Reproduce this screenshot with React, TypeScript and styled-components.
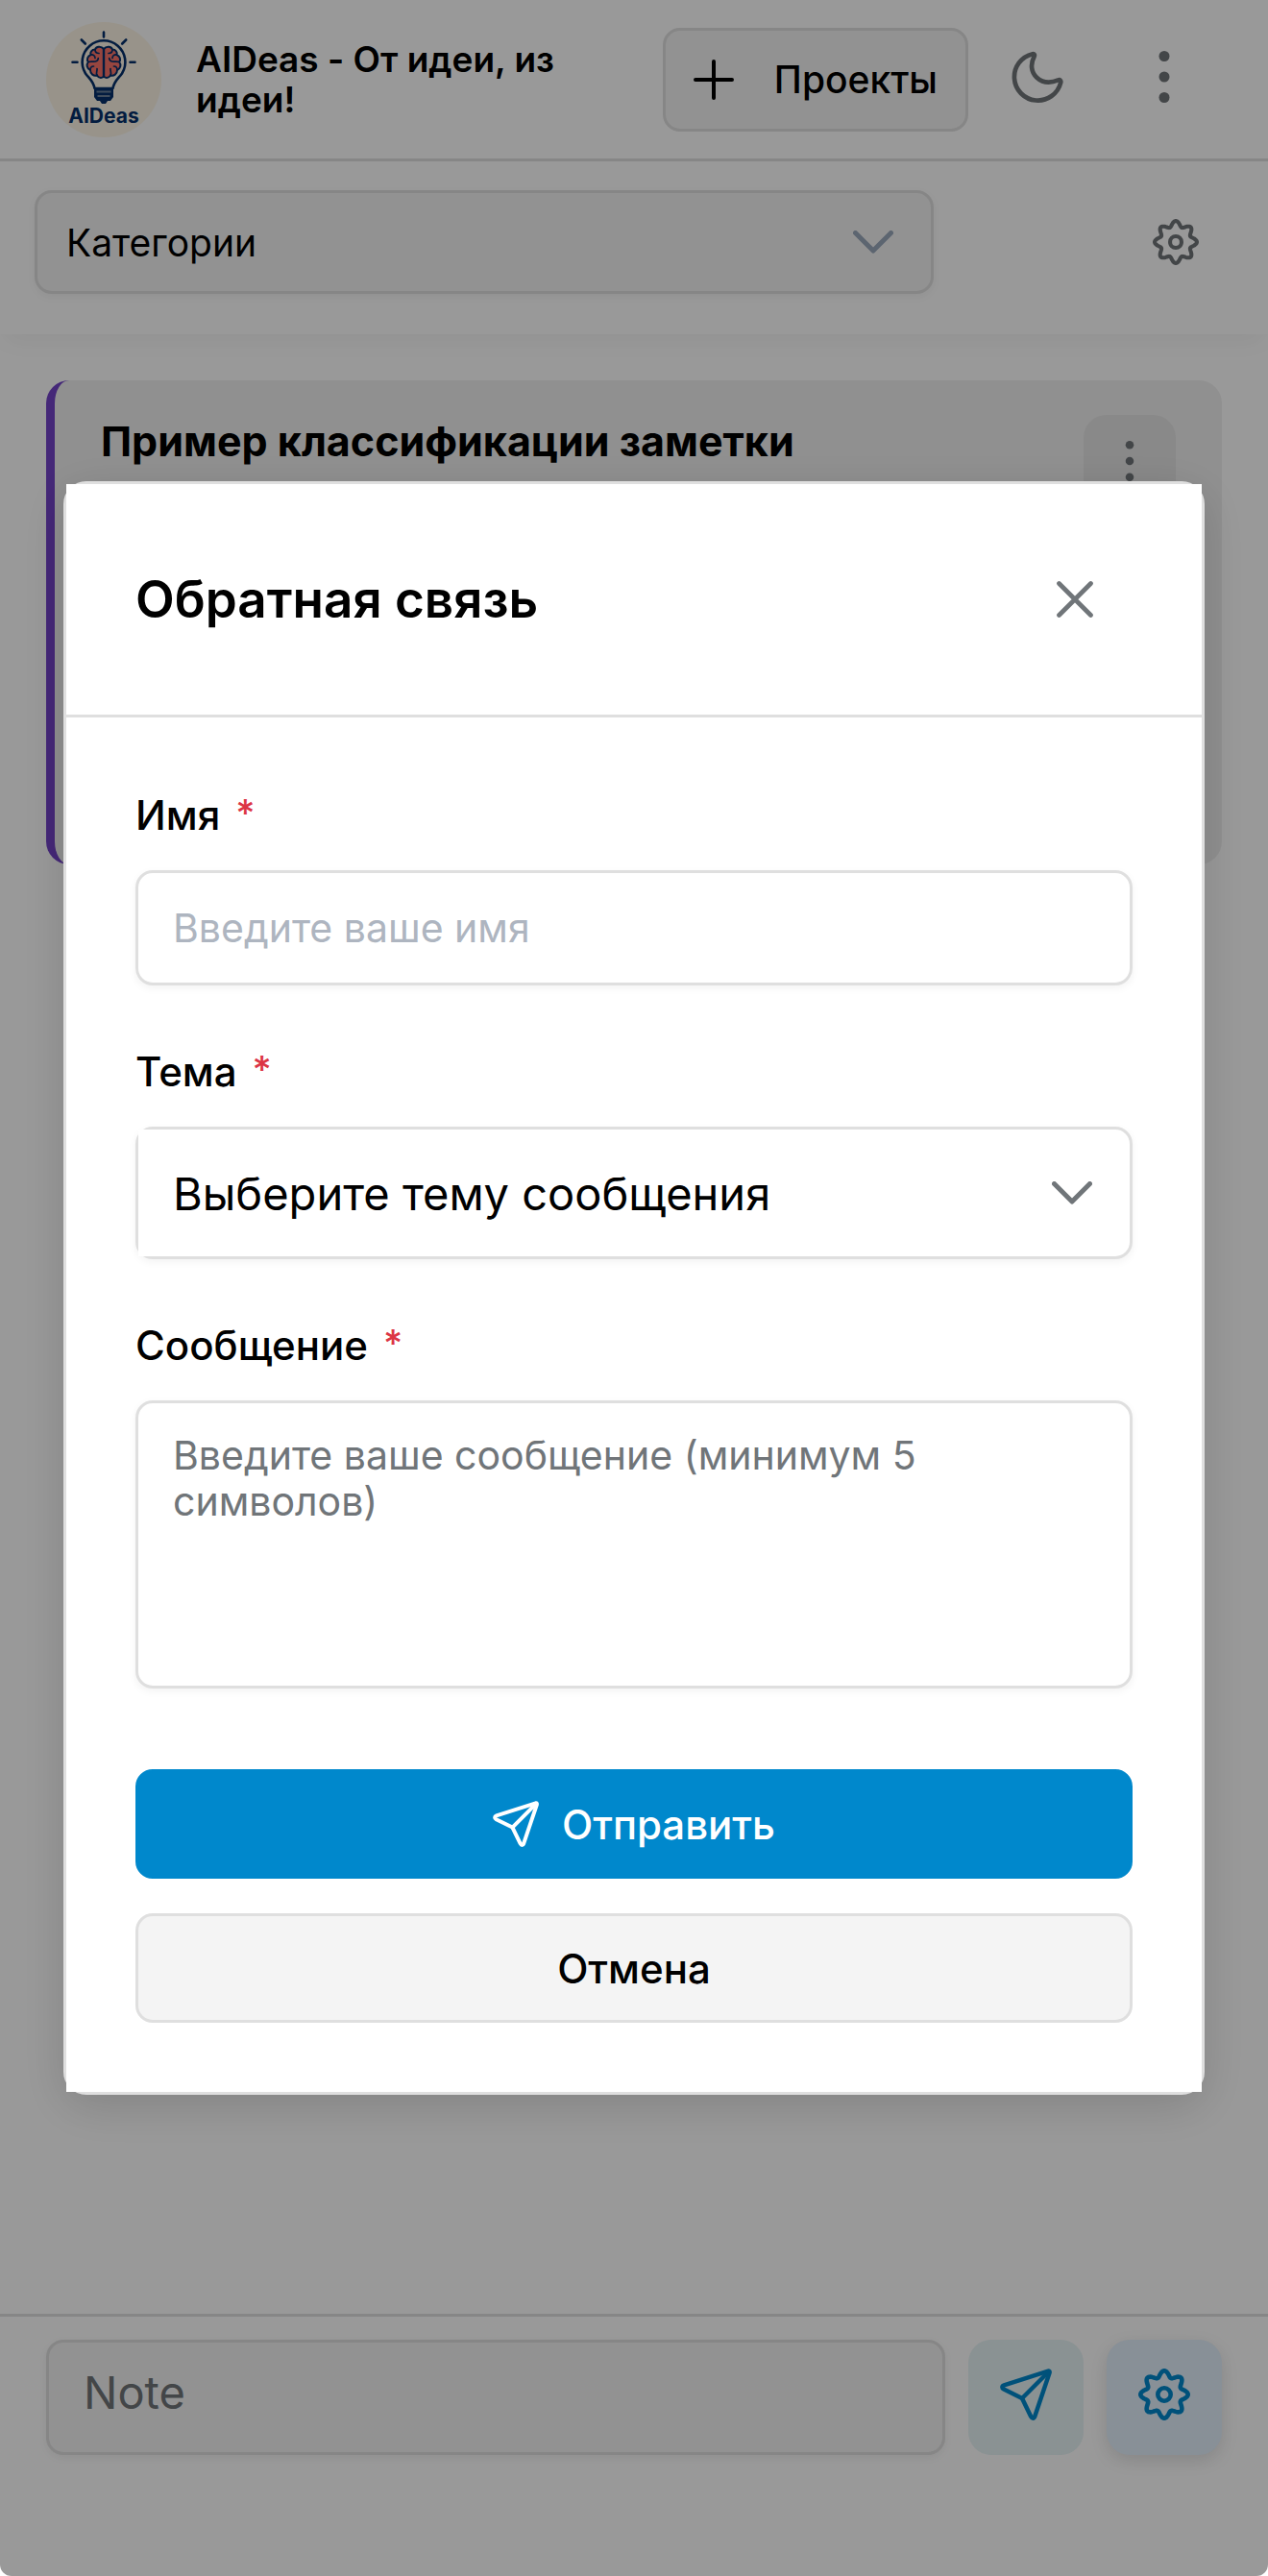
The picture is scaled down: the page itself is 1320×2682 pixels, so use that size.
import React from 'react';
import styled, { createGlobalStyle } from 'styled-components';

const color = {
  text: '#000000',
  muted: '#707579',
  placeholder: '#aeb5c0',
  border: '#dfdfdf',
  field: '#f4f4f4',
  card: '#f0f0f0',
  accent: '#0088cc',
  purple: '#7343c8',
  danger: '#dc3545',
  chevron: '#9aa8bb',
};

const GlobalStyle = createGlobalStyle`
  *, *::before, *::after { box-sizing: border-box; }
  body { margin: 0; background: #ffffff; }
  body, button, input, select, textarea {
    font-family: Inter, Roboto, 'Liberation Sans', sans-serif;
    color: ${color.text};
  }
  button, input, select, textarea { margin: 0; padding: 0; border: 0; }
  button { cursor: pointer; }
  svg { display: block; flex: none; }
`;

const Page = styled.div`
  display: flex;
  flex-direction: column;
  min-height: 100vh;
`;

const Header = styled.header`
  display: flex;
  align-items: center;
  gap: 24px;
  min-height: 168px;
  padding: 0 48px;
  border-bottom: 3px solid ${color.border};
`;

const Brand = styled.div`
  display: flex;
  flex: 1;
  align-items: center;
  gap: 36px;
  min-width: 0;
`;

const AppTitle = styled.h1`
  margin: 0;
  font-size: 37px;
  font-weight: 600;
  line-height: 42px;
`;

const ProjectsButton = styled.button`
  display: flex;
  align-items: center;
  gap: 42px;
  height: 108px;
  padding: 0 29px;
  border: 3px solid ${color.border};
  border-radius: 18px;
  background: ${color.field};
  font-size: 39px;
  font-weight: 500;
`;

const IconButton = styled.button<{ $width?: number; $lift?: boolean }>`
  display: flex;
  align-items: center;
  justify-content: center;
  width: ${(p) => p.$width ?? 120}px;
  height: 96px;
  padding-bottom: ${(p) => (p.$lift ? 6 : 0)}px;
  background: transparent;
  color: ${color.muted};
`;

const Toolbar = styled.div`
  display: flex;
  align-items: center;
  justify-content: space-between;
  padding: 30px 36px 42px;
  box-shadow: 0 12px 24px -6px rgba(0, 0, 0, 0.05);
`;

const SelectBox = styled.div<{ $filled?: boolean }>`
  display: flex;
  align-items: center;
  width: ${(p) => (p.$filled ? '75%' : '100%')};
  height: ${(p) => (p.$filled ? 108 : 138)}px;
  padding-right: 39px;
  border: 3px solid ${color.border};
  border-radius: 18px;
  background: ${(p) => (p.$filled ? color.field : '#ffffff')};
  color: ${(p) => (p.$filled ? color.chevron : color.muted)};
  box-shadow: 0 3px 9px rgba(0, 0, 0, 0.05);
`;

const CategorySelect = styled.select`
  flex: 1;
  min-width: 0;
  padding-left: 30px;
  appearance: none;
  background: transparent;
  font-size: 39px;
`;

const TopicSelect = styled.select`
  flex: 1;
  align-self: stretch;
  min-width: 0;
  padding-left: 36px;
  appearance: none;
  background: #ffffff;
  border-radius: 0;
  font-size: 47px;
`;

const Notes = styled.main`
  flex: 1;
  padding: 48px;
`;

const NoteCard = styled.article`
  display: flex;
  align-items: flex-start;
  justify-content: space-between;
  min-height: 504px;
  padding: 36px 48px;
  border-left: 9px solid ${color.purple};
  border-radius: 24px;
  background: ${color.card};
`;

const NoteTitle = styled.h2`
  margin: 0;
  font-size: 43px;
  font-weight: 700;
  line-height: 54px;
`;

const NoteMenu = styled.button`
  display: flex;
  align-items: center;
  justify-content: center;
  width: 96px;
  height: 96px;
  border-radius: 24px;
  background: #e4e4e4;
  color: ${color.muted};
`;

const Composer = styled.footer`
  display: flex;
  gap: 24px;
  padding: 24px 48px 126px;
  border-top: 3px solid ${color.border};
`;

const NoteInput = styled.textarea`
  flex: 1;
  min-width: 0;
  height: 120px;
  padding: 24px 36px;
  border: 3px solid ${color.border};
  border-radius: 18px;
  background: ${color.field};
  font-size: 47px;
  line-height: 56px;
  resize: none;
  box-shadow: 0 3px 9px rgba(0, 0, 0, 0.06);
  &::placeholder { color: ${color.muted}; }
`;

const ComposerButton = styled.button<{ $raised?: boolean }>`
  display: flex;
  align-items: center;
  justify-content: center;
  width: 120px;
  height: 120px;
  padding-bottom: 6px;
  border-radius: 24px;
  background: ${(p) => (p.$raised ? '#e3f0fc' : '#e6f3f5')};
  color: ${color.accent};
  box-shadow: ${(p) => (p.$raised ? '0 6px 18px rgba(0, 0, 0, 0.12)' : 'none')};
`;

const Backdrop = styled.div`
  position: fixed;
  inset: 0;
  display: flex;
  align-items: center;
  justify-content: center;
  border-radius: 0 0 12px 12px;
  background: rgba(0, 0, 0, 0.4);
`;

const Modal = styled.div`
  width: 90%;
  border: 3px solid ${color.border};
  border-radius: 24px;
  box-shadow: 0 12px 48px rgba(0, 0, 0, 0.15);
`;

const ModalHeader = styled.div`
  display: flex;
  align-items: center;
  justify-content: space-between;
  height: 243px;
  padding: 0 72px;
  border-bottom: 3px solid ${color.border};
  background: #ffffff;
`;

const ModalTitle = styled.h2`
  margin: 0;
  font-size: 53px;
  font-weight: 600;
  line-height: 64px;
`;

const Form = styled.form`
  padding: 72px;
  background: #ffffff;
`;

const Field = styled.div`
  display: flex;
  flex-direction: column;
  gap: 27px;
  margin-bottom: 60px;
`;

const Label = styled.label`
  display: flex;
  gap: 16px;
  font-size: 42px;
  font-weight: 500;
  line-height: 60px;
`;

const Required = styled.span`
  color: ${color.danger};
  font-size: 39px;
  line-height: 56px;
`;

const TextInput = styled.input`
  width: 100%;
  height: 120px;
  padding: 0 36px;
  border: 3px solid ${color.border};
  border-radius: 18px;
  background: #ffffff;
  font-size: 41px;
  box-shadow: 0 3px 9px rgba(0, 0, 0, 0.05);
  &::placeholder { color: ${color.placeholder}; }
`;

const MessageInput = styled.textarea`
  width: 100%;
  height: 300px;
  padding: 30px 36px;
  border: 3px solid ${color.border};
  border-radius: 18px;
  background: #ffffff;
  font-size: 41px;
  line-height: 48px;
  resize: none;
  box-shadow: 0 3px 9px rgba(0, 0, 0, 0.05);
  &::placeholder { color: ${color.muted}; }
`;

const Actions = styled.div`
  display: flex;
  flex-direction: column;
  gap: 36px;
  padding-top: 24px;
`;

const ActionButton = styled.button<{ $primary?: boolean }>`
  display: flex;
  align-items: center;
  justify-content: center;
  gap: 24px;
  height: 114px;
  border: 3px solid ${(p) => (p.$primary ? color.accent : color.border)};
  border-radius: 18px;
  background: ${(p) => (p.$primary ? color.accent : color.field)};
  color: ${(p) => (p.$primary ? '#ffffff' : color.text)};
  font-size: 42px;
  font-weight: 500;
`;

const stroke = {
  fill: 'none',
  stroke: 'currentColor',
  strokeLinecap: 'round' as const,
  strokeLinejoin: 'round' as const,
  'aria-hidden': true,
};

const PlusIcon = () => (
  <svg width="42" height="42" viewBox="0 0 42 42" strokeWidth="4" {...stroke}>
    <path d="M21 2v38M2 21h38" />
  </svg>
);

const MoonIcon = () => (
  <svg width="54" height="54" viewBox="0 0 54 54" strokeWidth="4.7" {...stroke}>
    <path d="M22 3.2A24.5 24.5 0 1 0 51.2 33C51.7 31 50.4 29.8 48.6 30.4C41 33.6 32.5 33.4 26.3 27.7C20.4 22.2 19.4 13.8 23.6 5.8C24.4 4 23.6 2.9 22 3.2Z" />
  </svg>
);

const DotsIcon = ({ size }: { size: number }) => (
  <svg width={size} height={size} viewBox="0 0 54 54" fill="currentColor" aria-hidden>
    <circle cx="27" cy="5.5" r="5.5" />
    <circle cx="27" cy="27" r="5.5" />
    <circle cx="27" cy="48.5" r="5.5" />
  </svg>
);

const ChevronIcon = () => (
  <svg width="42" height="24" viewBox="0 0 42 24" strokeWidth="5" {...stroke}>
    <path d="M2.5 2.5L21 21L39.5 2.5" />
  </svg>
);

const CloseIcon = () => (
  <svg width="38" height="38" viewBox="0 0 38 38" strokeWidth="4.7" {...stroke}>
    <path d="M2.5 2.5L35.5 35.5M35.5 2.5L2.5 35.5" />
  </svg>
);

// Eight rounded teeth: a circle whose radius swings around its mean.
const gearOutline = Array.from({ length: 160 }, (_, i) => {
  const angle = (i / 160) * Math.PI * 2;
  const radius = 21.5 + 3.2 * Math.cos(8 * angle);
  return `${(27 + radius * Math.cos(angle)).toFixed(2)},${(27 + radius * Math.sin(angle)).toFixed(2)}`;
}).join(' ');

const GearIcon = ({ size }: { size: number }) => (
  <svg width={size} height={size} viewBox="0 0 54 54" strokeWidth="4.6" {...stroke}>
    <polygon points={gearOutline} />
    <circle cx="27" cy="27" r="6.7" />
  </svg>
);

const SendIcon = ({ size }: { size: number }) => (
  <svg width={size} height={size} viewBox="0 0 54 54" strokeWidth="4.5" {...stroke}>
    <path d="M50.2 2.6L4.2 17.3C1.8 18.2 1.8 20.4 4 21.6L23 31L32.2 50C33.4 52.3 35.4 52.2 36.2 50L51.5 4.6C51.9 3.2 51.4 2.3 50.2 2.6Z" />
    <path d="M23 31L50.5 3.5" />
  </svg>
);

const Logo = () => (
  <svg width="120" height="120" viewBox="0 0 120 120" role="img" aria-label="AIDeas">
    <circle cx="60" cy="60" r="60" fill="#fdf6e6" />
    <g fill="none" stroke="#05306b" strokeWidth="2.6" strokeLinecap="round" strokeLinejoin="round">
      <path d="M60 10.5v5M36.8 18.5l4 4M83.2 18.5l-4 4M27.500 41.7h5M92.5 41.7h-5" />
      <path d="M50.5 69C49 61 44.5 58.5 41 53.5A22.4 22.4 0 1 1 79 53.5C75.5 58.5 71 61 69.5 69Z" />
    </g>
    <path d="M50 68h20v10l-3 4h-3l-2 3h-4l-2-3h-3l-3-4z" fill="#05306b" />
    <path d="M52.5 72.5h15M53.5 77h13" stroke="#6d8199" strokeWidth="2" />
    <path
      d="M60 28C57 24.5 52 25.5 51 28.5C47.5 28.5 45.5 31.5 46.5 34C43 35.5 42 39 43.8 41.5C41.5 44.5 42.5 48.5 46 50C46 54 49.5 56.5 53 55.5C55 58.8 59 58.5 60 56C61 58.5 65 58.8 67 55.5C70.5 56.5 74 54 74 50C77.5 48.5 78.5 44.5 76.2 41.5C78 39 77 35.5 73.5 34C74.5 31.5 72.5 28.5 69 28.5C68 25.5 63 24.5 60 28Z"
      fill="#fb7469"
      stroke="#05306b"
      strokeWidth="2"
    />
    <g fill="none" stroke="#05306b" strokeWidth="1.7" strokeLinecap="round">
      <path d="M60 28v28" strokeWidth="2.4" />
      <path d="M51 28.5c0 3 2 4 4 4M46.5 34c2.5-.5 4.5 1 4.5 3.5M43.8 41.5c3-1 5.5 0 7.500-.5s3-2 3-3.500M46 50c0-2.5 1-4 3.5-4M53 55.5c-1.5-3 .5-4.5 0-7" />
      <path d="M69 28.5c0 3-2 4-4 4M73.5 34c-2.5-.5-4.5 1-4.5 3.5M76.2 41.5c-3-1-5.5 0-7.5-.5s-3-2-3-3.5M74 50c0-2.5-1-4-3.5-4M67 55.5c1.5-3-.5-4.5 0-7" />
    </g>
    <text x="60" y="105" textAnchor="middle" fontFamily="Inter, sans-serif" fontSize="21" fontWeight="700" fill="#05306b">
      AIDeas
    </text>
  </svg>
);

function FieldLabel({ htmlFor, children }: { htmlFor: string; children: React.ReactNode }) {
  return (
    <Label htmlFor={htmlFor}>
      {children}
      <Required>*</Required>
    </Label>
  );
}

export default function App() {
  return (
    <>
      <GlobalStyle />
      <Page>
        <Header>
          <Brand>
            <Logo />
            <AppTitle>AIDeas - От идеи, из идеи!</AppTitle>
          </Brand>
          <ProjectsButton type="button">
            <PlusIcon />
            Проекты
          </ProjectsButton>
          <IconButton type="button" aria-label="Тема" $width={96} $lift>
            <MoonIcon />
          </IconButton>
          <IconButton type="button" aria-label="Меню" $lift>
            <DotsIcon size={54} />
          </IconButton>
        </Header>
        <Toolbar>
          <SelectBox $filled>
            <CategorySelect aria-label="Категории">
              <option>Категории</option>
            </CategorySelect>
            <ChevronIcon />
          </SelectBox>
          <IconButton type="button" aria-label="Настройки категорий">
            <GearIcon size={48} />
          </IconButton>
        </Toolbar>
        <Notes>
          <NoteCard>
            <NoteTitle>Пример классификации заметки</NoteTitle>
            <NoteMenu type="button" aria-label="Действия">
              <DotsIcon size={42} />
            </NoteMenu>
          </NoteCard>
        </Notes>
        <Composer>
          <NoteInput rows={1} placeholder="Note" aria-label="Note" />
          <ComposerButton type="button" aria-label="Отправить заметку">
            <SendIcon size={54} />
          </ComposerButton>
          <ComposerButton type="button" aria-label="Настройки" $raised>
            <GearIcon size={54} />
          </ComposerButton>
        </Composer>
      </Page>
      <Backdrop>
        <Modal role="dialog" aria-modal="true" aria-labelledby="feedback-title">
          <ModalHeader>
            <ModalTitle id="feedback-title">Обратная связь</ModalTitle>
            <IconButton type="button" aria-label="Закрыть">
              <CloseIcon />
            </IconButton>
          </ModalHeader>
          <Form onSubmit={(e) => e.preventDefault()}>
            <Field>
              <FieldLabel htmlFor="name">Имя</FieldLabel>
              <TextInput id="name" type="text" placeholder="Введите ваше имя" required />
            </Field>
            <Field>
              <FieldLabel htmlFor="topic">Тема</FieldLabel>
              <SelectBox>
                <TopicSelect id="topic" required>
                  <option value="">Выберите тему сообщения</option>
                </TopicSelect>
                <ChevronIcon />
              </SelectBox>
            </Field>
            <Field>
              <FieldLabel htmlFor="message">Сообщение</FieldLabel>
              <MessageInput id="message" placeholder="Введите ваше сообщение (минимум 5 символов)" required />
            </Field>
            <Actions>
              <ActionButton type="submit" $primary>
                <SendIcon size={48} />
                Отправить
              </ActionButton>
              <ActionButton type="button">Отмена</ActionButton>
            </Actions>
          </Form>
        </Modal>
      </Backdrop>
    </>
  );
}
